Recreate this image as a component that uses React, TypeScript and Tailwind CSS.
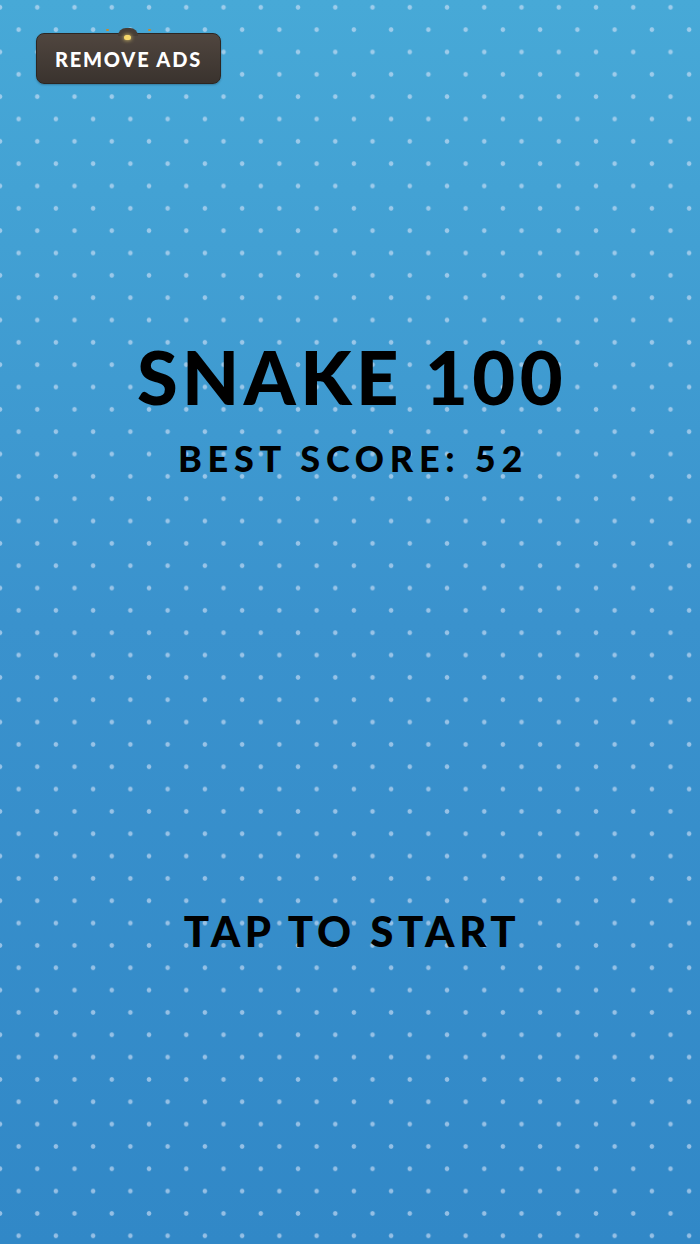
import React from 'react';

// Title screen for the snake game: dotted blue backdrop, remove-ads pill, title and start prompt.
function RemoveAdsButton() {
    return (
        <div className="relative w-[185px]">
            {/* little lamp that sits on top of the pill */}
            <div className="absolute left-[82px] top-[-5px] h-[8px] w-[20px] rounded-t-full bg-[#463d36]" />
            <div className="absolute left-[88px] top-[2px] h-[5px] w-[7px] rounded-full bg-[#f6d86a] shadow-[0_0_4px_#f9e07a]" />
            <div className="absolute left-[70px] top-[-4px] h-[2px] w-[3px] rounded-full bg-[#c98a2c]" />
            <div className="absolute left-[112px] top-[-4px] h-[2px] w-[3px] rounded-full bg-[#c98a2c]" />
            <button className="flex h-[51px] w-[185px] items-center justify-center rounded-[8px] border border-[#2c2622] bg-gradient-to-b from-[#50463f] to-[#3a332e] shadow-[0_1px_2px_rgba(0,0,0,0.25)]">
                <span className="text-[20px] leading-none font-black tracking-[0.09em] text-white">
                    REMOVE ADS
                </span>
            </button>
        </div>
    );
}

export default function App() {
    return (
        <div
            className="flex h-[1244px] w-full flex-col overflow-hidden bg-[radial-gradient(circle,rgba(215,228,248,0.6)_1.9px,transparent_2.7px),radial-gradient(circle,rgba(215,228,248,0.6)_1.9px,transparent_2.7px),linear-gradient(to_bottom,#47a9d7,#3a92cd_50%,#3188c7)] bg-[length:37.25px_44.68px,37.25px_44.68px,100%_100%] bg-[position:-18.62px_-15.04px,0px_7.3px,0_0] font-['Lato','Liberation_Sans',sans-serif] text-black"
        >
            <div className="pt-[33px] pl-[36px]">
                <RemoveAdsButton />
            </div>

            <div className="mt-[256px] flex flex-col items-center">
                <h1 className="pl-[4px] text-[74px] leading-none font-black tracking-[0.06em]">SNAKE 100</h1>
                <p className="mt-[26px] pl-[6px] text-[36px] leading-none font-black tracking-[0.16em]">BEST SCORE: 52</p>
            </div>

            <div className="mt-[434px] flex justify-center">
                <span className="pl-[4px] text-[42px] leading-none font-black tracking-[0.11em]">TAP TO START</span>
            </div>
        </div>
    );
}
